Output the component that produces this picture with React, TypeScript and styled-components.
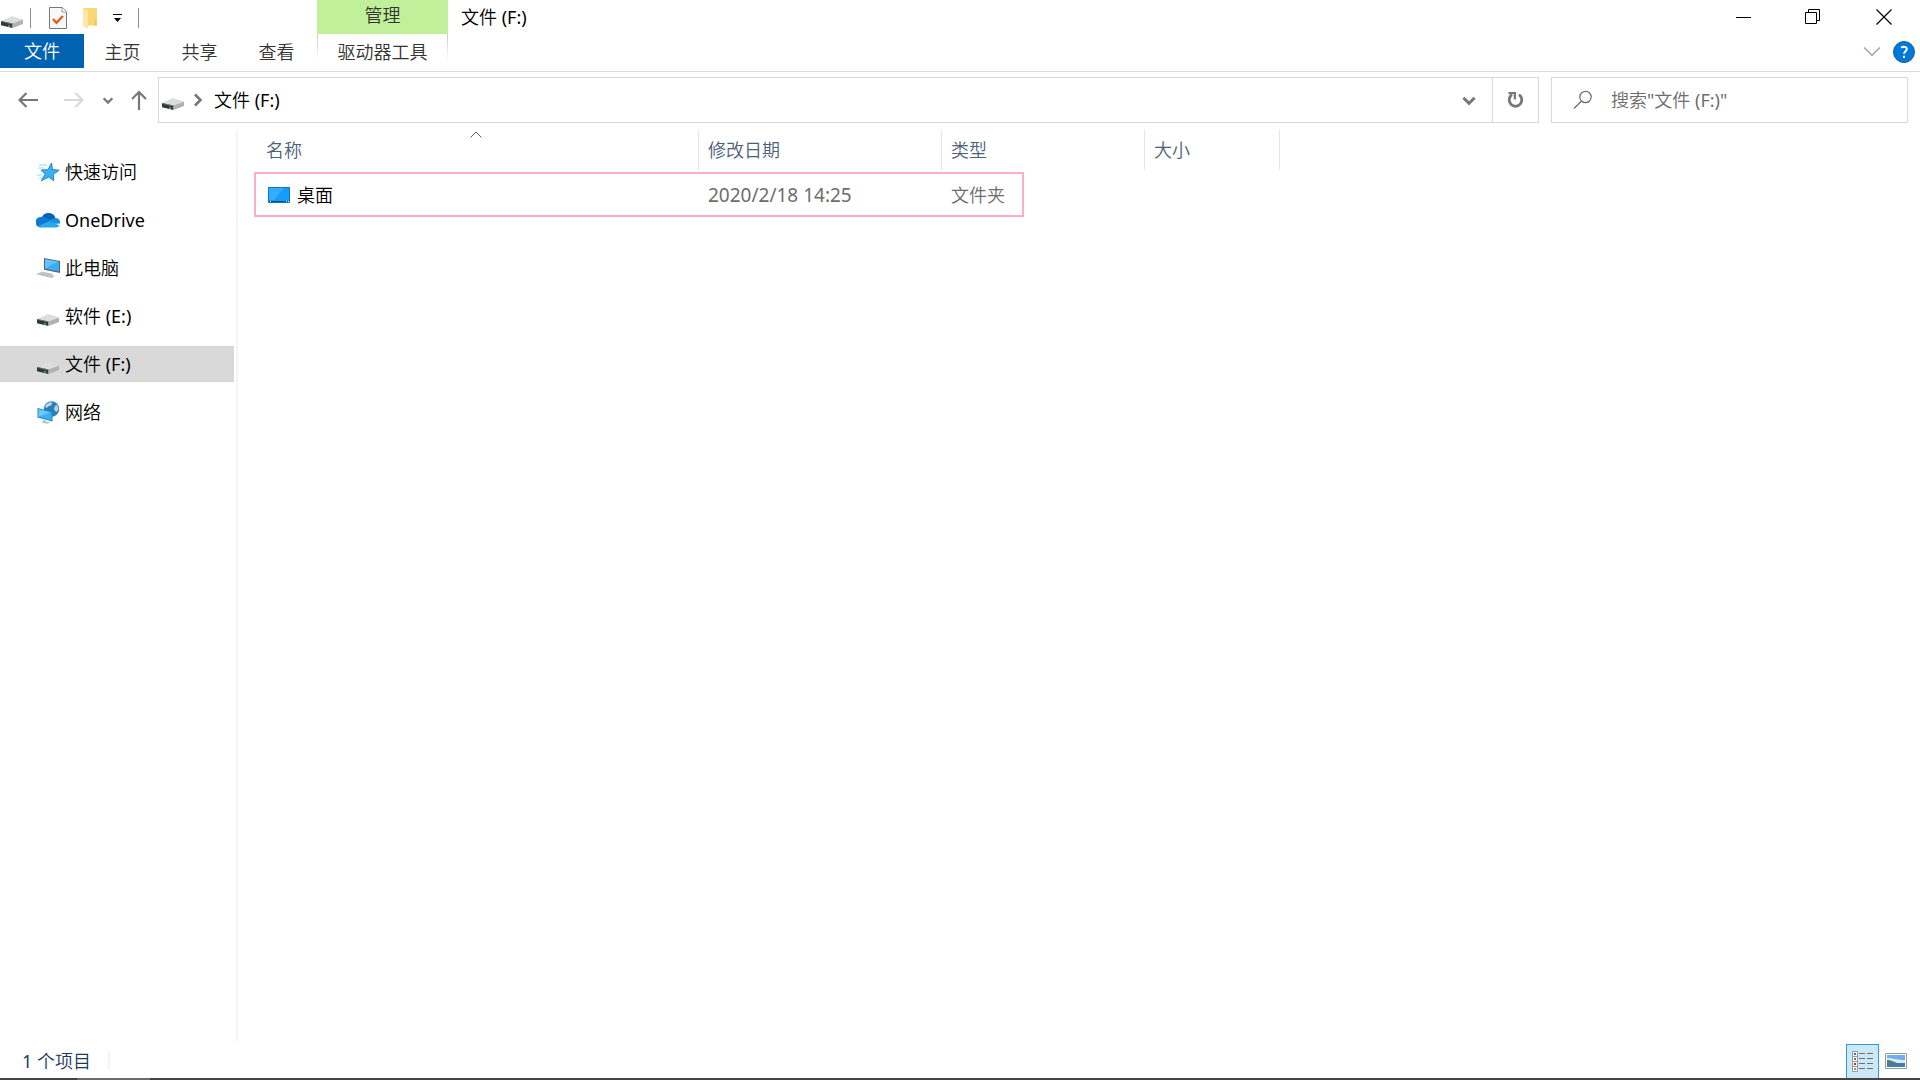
import React from "react";
import styled, { createGlobalStyle, css } from "styled-components";

const GlobalStyle = createGlobalStyle`
  *, *::before, *::after { box-sizing: border-box; }
  body {
    margin: 0;
    background: #fff;
    color: #000;
    font: 400 18px/24px "Noto Sans", "Noto Sans CJK SC DemiLight", "Noto Sans CJK SC", sans-serif;
  }
  button, input { font: inherit; color: inherit; }
  svg { display: block; flex: none; }
`;

const plainButton = css`
  display: flex;
  align-items: center;
  justify-content: center;
  flex: none;
  padding: 0;
  border: 0;
  background: none;
`;

const Window = styled.div`
  display: flex;
  flex-direction: column;
  min-height: 100vh;
`;

const TitleBar = styled.header`
  display: flex;
  height: 34px;
`;

const QuickAccess = styled.div`
  display: flex;
  align-items: center;
  width: 317px;
  padding-top: 2px;
`;

const Separator = styled.span<{ $before: number; $after: number }>`
  width: 1px;
  height: 20px;
  margin: 0 ${(p) => p.$after}px 0 ${(p) => p.$before}px;
  background: #8c8c8c;
`;

const IconButton = styled.button<{ $width: number }>`
  ${plainButton}
  width: ${(p) => p.$width}px;
`;

const ContextLabel = styled.div`
  width: 131px;
  background: #c1f09b;
  color: #333;
  line-height: 30px;
  text-align: center;
`;

const WindowTitle = styled.h1`
  flex: 1;
  margin: 0;
  padding-left: 13px;
  font: inherit;
  line-height: 34px;
`;

const Caption = styled.div`
  display: flex;
`;

const Ribbon = styled.nav`
  display: flex;
  height: 38px;
  padding-bottom: 3px;
  border-bottom: 1px solid #dadbdc;
`;

const FileTab = styled.button`
  ${plainButton}
  width: 84px;
  background: #0063b1;
  color: #fff;
`;

const Tab = styled.button`
  ${plainButton}
  width: 77px;
  padding-top: 2px;
  color: #333;
`;

const ContextTab = styled(Tab)`
  width: 131px;
  margin-left: 2px;
  background:
    linear-gradient(#c8c8c8, #fff) left top / 1px 28px no-repeat,
    linear-gradient(#c8c8c8, #fff) right top / 1px 28px no-repeat;
`;

const RibbonEnd = styled.div`
  display: flex;
  align-items: center;
  gap: 12px;
  margin-left: auto;
  padding: 2px 5px 0 0;
`;

const Toolbar = styled.div`
  display: flex;
  height: 58px;
  padding: 5px 12px 7px 0;
`;

const Navigation = styled.div`
  display: flex;
  width: 158px;
  padding-left: 5px;
`;

const field = css`
  display: flex;
  border: 1px solid #d9d9d9;
`;

const AddressBar = styled.div`
  ${field}
  flex: 1;
  padding-left: 2px;
`;

const Crumb = styled.button`
  ${plainButton}
  gap: 5px;
  margin-right: auto;
`;

const CrumbName = styled.span`
  padding-left: 3px;
`;

const AddressButton = styled.button<{ $ruled?: boolean }>`
  ${plainButton}
  width: 46px;
  border-left: ${(p) => (p.$ruled ? "1px solid #d9d9d9" : "0")};
`;

const SearchBox = styled.label`
  ${field}
  align-items: center;
  gap: 18px;
  width: 357px;
  margin-left: 12px;
  padding-left: 21px;
`;

const SearchInput = styled.input`
  flex: 1;
  min-width: 0;
  padding: 0;
  border: 0;
  outline: 0;
  background: none;
  &::placeholder { color: #6d6d6d; opacity: 1; }
`;

const Body = styled.div`
  display: flex;
  flex: 1;
`;

const Sidebar = styled.nav`
  display: flex;
  flex-direction: column;
  gap: 12px;
  width: 238px;
  padding: 24px 2px 0 0;
  border-right: 2px solid #f5f5f5;
`;

const Place = styled.a<{ $active?: boolean }>`
  display: flex;
  align-items: center;
  gap: 5px;
  height: 36px;
  padding-left: 36px;
  background: ${(p) => (p.$active ? "#d9d9d9" : "transparent")};
  color: #000;
  text-decoration: none;
`;

const Content = styled.main`
  flex: 1;
  padding-left: 16px;
`;

const Files = styled.table`
  width: 1026px;
  border-collapse: separate;
  border-spacing: 0;
  table-layout: fixed;
`;

const HeaderCell = styled.th<{ $width: number; $first?: boolean }>`
  position: relative;
  width: ${(p) => p.$width}px;
  height: 40px;
  padding: 0 0 0 ${(p) => (p.$first ? 12 : 9)}px;
  border-right: 1px solid #e5e5e5;
  color: #4c607a;
  font-weight: inherit;
  text-align: left;
`;

const SortMark = styled.span`
  position: absolute;
  top: 1px;
  left: 50%;
  transform: translateX(-50%);
`;

const Cell = styled.td`
  height: 50px;
  padding: 0 0 0 9px;
  color: #6d6d6d;
`;

const DateCell = styled(Cell)`
  font-size: 19px;
`;

const NameCell = styled(Cell)`
  position: relative;
  padding-left: 14px;
  color: #000;
  &::after {
    content: "";
    position: absolute;
    top: 2px;
    left: 0;
    width: 770px;
    height: 45px;
    border: 2px solid #ffaec9;
    pointer-events: none;
  }
`;

const FileName = styled.span`
  display: flex;
  align-items: center;
  gap: 7px;
`;

const StatusBar = styled.footer`
  display: flex;
  height: 36px;
  padding: 2px 8px 0 22px;
  color: #1e395b;
`;

const Count = styled.span`
  align-self: center;
  height: 18px;
  padding-right: 17px;
  border-right: 2px solid #f3f3f3;
  line-height: 18px;
`;

const Views = styled.div`
  display: flex;
  margin-left: auto;
`;

const ViewButton = styled.button<{ $active?: boolean }>`
  ${plainButton}
  width: 33px;
  border: ${(p) => (p.$active ? "1px solid #26a0da" : "0")};
  border-bottom: 0;
  background: ${(p) => (p.$active ? "#cce8f6" : "none")};
`;

const TaskbarEdge = styled.div`
  height: 2px;
  background: linear-gradient(90deg, #444 77px, #6b6b6b 77px 150px, #444 150px);
`;

const DriveIcon = () => (
  <svg width="24" height="24" viewBox="0 0 24 24">
    <path d="M1 15 12 10l11 3.400-10.500 4.200z" fill="#dcdddf" />
    <path d="M1 15 12.500 17.400v4.600L1 19.200z" fill="#333536" />
    <path d="m12.500 17.400 10.500-4v4.600l-10.500 4z" fill="#b0b1b3" />
    <path d="M1 15 12.500 17.400v1L1 15.800z" fill="#777" />
    <path d="M8 18.800l2 .5v1.600l-2-.4z" fill="#31b34a" />
  </svg>
);

const TaskIcon = () => (
  <svg width="18" height="22" viewBox="0 0 18 22">
    <path d="M.5.5h12.8l4.2 4.2v16.8H.5z" fill="#f8f8f8" stroke="#777" />
    <path d="M13 .5v4.5h4.5" fill="#fff" stroke="#999" />
    <path d="m4 12 3.400 3.800L14 9" fill="none" stroke="#e8561c" strokeWidth="2.2" />
  </svg>
);

const FolderIcon = () => (
  <svg width="14" height="22" viewBox="0 0 14 22">
    <path d="M0 1h14v17.5H3z" fill="#f8d775" />
    <path d="M11 13h3v5.500h-3z" fill="#f3cb5d" />
    <path d="m0 1 5 3v18l-5-3z" fill="#ffe8a2" />
  </svg>
);

const CustomizeIcon = () => (
  <svg width="10" height="10" viewBox="0 0 10 10">
    <path d="M0 1.500h9" stroke="#000" />
    <path d="M1 5h7L4.500 9z" fill="#000" />
  </svg>
);

const StarIcon = () => (
  <svg width="24" height="24" viewBox="0 0 24 24">
    <path d="M3 5h8M2 8h6M4 11h4M1 15h5M3 18h3" stroke="#9ad4f4" />
    <path d="m15.500 3 1 6.500 6.700.7-5.800 4.100.3 6.500-5-3.700-7.400 3.700 3.700-6.500-3.500-4.400 6.500-.2z" fill="#35b2f4" stroke="#2788cc" />
  </svg>
);

const CloudIcon = () => (
  <svg width="24" height="24" viewBox="0 0 24 24">
    <path d="M6 9a7.300 7.300 0 0 1 13.500 1.200L14 14z" fill="#0761b7" />
    <path d="M4.500 19.400A5 5 0 0 1 5 9c2-.6 3.800 0 5.500 1l6.500 4z" fill="#0f78d2" />
    <path d="m13.500 12 4-1.500c4-1.500 7 1.500 6.500 5L16 16z" fill="#1491df" />
    <path d="m2 18 11.500-5 10 4.500a4 4 0 0 1-3.500 2H5.500A5 5 0 0 1 2 18z" fill="#29a7ea" />
  </svg>
);

const ComputerIcon = () => (
  <svg width="24" height="24" viewBox="0 0 24 24">
    <path d="m8 2 16 3v12L8 13.800z" fill="#58626b" />
    <path d="m9 3.200 14 2.600v9.800L9 12.800z" fill="#38aef8" />
    <path d="M9 3.200 22 5.600 9 12.500z" fill="#62c2fb" />
    <path d="m1 18 5-2 11 2.500-4 2.500z" fill="#d6dce2" stroke="#a1a9af" strokeWidth=".6" />
    <path d="m13 21 4-1.500 2 .6-4 2z" fill="#b2b8bd" />
    <path d="m4 18 9 1.800M6 17l9 1.800" stroke="#9ba4ab" strokeWidth=".6" />
  </svg>
);

const NetworkIcon = () => (
  <svg width="24" height="24" viewBox="0 0 24 24">
    <circle cx="15.500" cy="9" r="7.700" fill="#2e7eaf" />
    <path d="m10 4.500 3.500-2.300 3 .3-1.500 3-3 1-1 1.500-2-1zM19 6l2-1.500L22.500 9l-2 3-1.500-1-1-2z" fill="#a9d8ed" />
    <path d="m1.500 8 15 3.800v9.700l-15-4z" fill="#2683bd" />
    <path d="m2.500 9.300 13 3.300v7.700l-13-3.500z" fill="#38aff8" />
    <path d="m2.500 9.300 12 3-12 4.400z" fill="#6ac9fc" />
    <path d="m7.500 20 3 .8v1.200l4-.2-3 1.900-6-1.200z" fill="#bbc2c7" />
  </svg>
);

const DesktopIcon = () => (
  <svg width="22" height="16" viewBox="0 0 22 16">
    <path d="M.5.5h21v15H.5z" fill="#169cf8" stroke="#0a78bf" />
    <path d="M1 1h15L6 13H1z" fill="#35adfc" />
    <path d="M1 14.500h20" stroke="#08508b" />
    <path d="M2 14.500h1M18 14.500h1M20 14.500h1" stroke="#fff" />
  </svg>
);

const Arrow = ({ d, color = "#777" }: { d: string; color?: string }) => (
  <svg width="20" height="20" viewBox="0 0 20 20">
    <path d={d} fill="none" stroke={color} strokeWidth="2.2" />
  </svg>
);

const Chevron = ({ d, size, color = "#777", weight = 2.6 }: { d: string; size: number; color?: string; weight?: number }) => (
  <svg width={size} height={size} viewBox="0 0 16 16">
    <path d={d} fill="none" stroke={color} strokeWidth={weight} />
  </svg>
);

const RefreshIcon = () => (
  <svg width="18" height="18" viewBox="0 0 18 18">
    <path d="M12 3.700a6.300 6.300 0 1 1-7 0" fill="none" stroke="#777" strokeWidth="2.800" />
    <path d="M1.500 1H9v7.500H6.800V3.200H1.500z" fill="#777" />
  </svg>
);

const SearchIcon = () => (
  <svg width="20" height="20" viewBox="0 0 20 20">
    <circle cx="12.500" cy="7" r="5.700" fill="none" stroke="#6d6d6d" strokeWidth="1.200" />
    <path d="m8.500 11-7.500 7.500" stroke="#6d6d6d" strokeWidth="1.200" />
  </svg>
);

const HelpIcon = () => (
  <svg width="22" height="22" viewBox="0 0 22 22">
    <circle cx="11" cy="11" r="10.500" fill="#0078d7" stroke="#0862ad" />
    <path d="M8.200 6.800c1.300-1.300 5.600-1.600 5.600 1.300 0 2-2.800 2.300-2.800 4.700" fill="none" stroke="#fff" strokeWidth="2" />
    <path d="M10 14.800h2V17h-2z" fill="#fff" />
  </svg>
);

const DetailsIcon = () => (
  <svg width="22" height="22" viewBox="0 0 22 22">
    <path d="M.5.500h5v20h-5zM.5 5.500h5M.5 10.500h5M.5 15.500h5" fill="#fff" stroke="#999" />
    <path d="M2 2h2v2H2z" fill="#2873b8" />
    <path d="M2 7h2v2H2z" fill="#80702a" />
    <path d="M2 12h2v2H2z" fill="#c92b20" />
    <path d="M2 17h2v2H2z" fill="#71a58a" />
    <path d="M7 2.500h6M15 2.500h6M7 7.500h6M15 7.500h6M7 12.500h6M15 12.500h6M7 17.500h6M15 17.500h6" stroke="#707070" />
  </svg>
);

const PictureIcon = () => (
  <svg width="22" height="16" viewBox="0 0 22 16">
    <path d="M.5.500h21v15H.5z" fill="#fff" stroke="#999" />
    <path d="M2 2h18v12H2z" fill="#74aeea" />
    <path d="M2 5c5 0 10 2 18 2v3H2z" fill="#d5e9f6" />
    <path d="M2 7c4 0 7 2 10 3H2z" fill="#4f7f62" />
    <path d="M2 10h18v4H2z" fill="#467ba3" />
  </svg>
);

const DOWN = "m3 6 5 5 5-5";
const places = [
  { name: "快速访问", Icon: StarIcon },
  { name: "OneDrive", Icon: CloudIcon },
  { name: "此电脑", Icon: ComputerIcon },
  { name: "软件 (E:)", Icon: DriveIcon },
  { name: "文件 (F:)", Icon: DriveIcon, active: true },
  { name: "网络", Icon: NetworkIcon },
];
const columns = [
  { name: "名称", width: 445, sorted: true },
  { name: "修改日期", width: 243 },
  { name: "类型", width: 203 },
  { name: "大小", width: 135 },
];
const files = [{ name: "桌面", modified: "2020/2/18 14:25", type: "文件夹" }];

export default function App() {
  return (
    <Window>
      <GlobalStyle />
      <TitleBar>
        <QuickAccess>
          <DriveIcon />
          <Separator $before={6} $after={14} />
          <IconButton $width={26} aria-label="属性"><TaskIcon /></IconButton>
          <IconButton $width={38} aria-label="新建文件夹"><FolderIcon /></IconButton>
          <IconButton $width={18} aria-label="自定义快速访问工具栏"><CustomizeIcon /></IconButton>
          <Separator $before={11} $after={0} />
        </QuickAccess>
        <ContextLabel>管理</ContextLabel>
        <WindowTitle>文件 (F:)</WindowTitle>
        <Caption>
          <IconButton $width={68} aria-label="最小化">
            <svg width="16" height="16"><path d="M0 8.500h15" stroke="#000" /></svg>
          </IconButton>
          <IconButton $width={70} aria-label="还原">
            <svg width="16" height="16"><path d="M.5 3.500h11v11H.5zM3.500 3.500v-3h11v11h-3" fill="none" stroke="#000" /></svg>
          </IconButton>
          <IconButton $width={72} aria-label="关闭">
            <svg width="16" height="16"><path d="m.5.500 15 15m0-15-15 15" stroke="#000" strokeWidth="1.200" /></svg>
          </IconButton>
        </Caption>
      </TitleBar>
      <Ribbon>
        <FileTab>文件</FileTab>
        <Tab>主页</Tab>
        <Tab>共享</Tab>
        <Tab>查看</Tab>
        <ContextTab>驱动器工具</ContextTab>
        <RibbonEnd>
          <IconButton $width={18} aria-label="展开功能区"><Chevron d="m1 4 7 7 7-7" size={18} color="#aaa" weight={1.5} /></IconButton>
          <IconButton $width={22} aria-label="帮助"><HelpIcon /></IconButton>
        </RibbonEnd>
      </Ribbon>
      <Toolbar>
        <Navigation>
          <IconButton $width={46} aria-label="后退"><Arrow d="M20 10H2M8.500 3 1.500 10l7 7" /></IconButton>
          <IconButton $width={46} aria-label="前进"><Arrow d="M0 10H18M11.500 3l7 7-7 7" color="#d9d9d9" /></IconButton>
          <IconButton $width={22} aria-label="最近浏览的位置"><Chevron d={DOWN} size={14} /></IconButton>
          <IconButton $width={39} aria-label="向上"><Arrow d="M10 20V2M3 9l7-7 7 7" /></IconButton>
        </Navigation>
        <AddressBar>
          <Crumb>
            <DriveIcon />
            <Chevron d="m5 2.500 5.500 5.500L5 13.500" size={16} />
            <CrumbName>文件 (F:)</CrumbName>
          </Crumb>
          <AddressButton aria-label="以前的位置"><Chevron d={DOWN} size={18} /></AddressButton>
          <AddressButton $ruled aria-label="刷新"><RefreshIcon /></AddressButton>
        </AddressBar>
        <SearchBox>
          <SearchIcon />
          <SearchInput type="text" aria-label="搜索" placeholder={'搜索"文件 (F:)"'} />
        </SearchBox>
      </Toolbar>
      <Body>
        <Sidebar>
          {places.map(({ name, Icon, active }) => (
            <Place key={name} href="#" $active={active}><Icon />{name}</Place>
          ))}
        </Sidebar>
        <Content>
          <Files>
            <thead>
              <tr>
                {columns.map((c) => (
                  <HeaderCell key={c.name} $width={c.width} $first={c.sorted}>
                    {c.name}
                    {c.sorted && <SortMark><svg width="12" height="7"><path d="m.5 6.500 5.500-5.500 5.500 5.500" fill="none" stroke="#666" /></svg></SortMark>}
                  </HeaderCell>
                ))}
              </tr>
            </thead>
            <tbody>
              {files.map((f) => (
                <tr key={f.name}>
                  <NameCell><FileName><DesktopIcon />{f.name}</FileName></NameCell>
                  <DateCell>{f.modified}</DateCell>
                  <Cell>{f.type}</Cell>
                  <Cell />
                </tr>
              ))}
            </tbody>
          </Files>
        </Content>
      </Body>
      <StatusBar>
        <Count>1 个项目</Count>
        <Views>
          <ViewButton $active aria-label="详细信息"><DetailsIcon /></ViewButton>
          <ViewButton aria-label="大缩略图"><PictureIcon /></ViewButton>
        </Views>
      </StatusBar>
      <TaskbarEdge />
    </Window>
  );
}
